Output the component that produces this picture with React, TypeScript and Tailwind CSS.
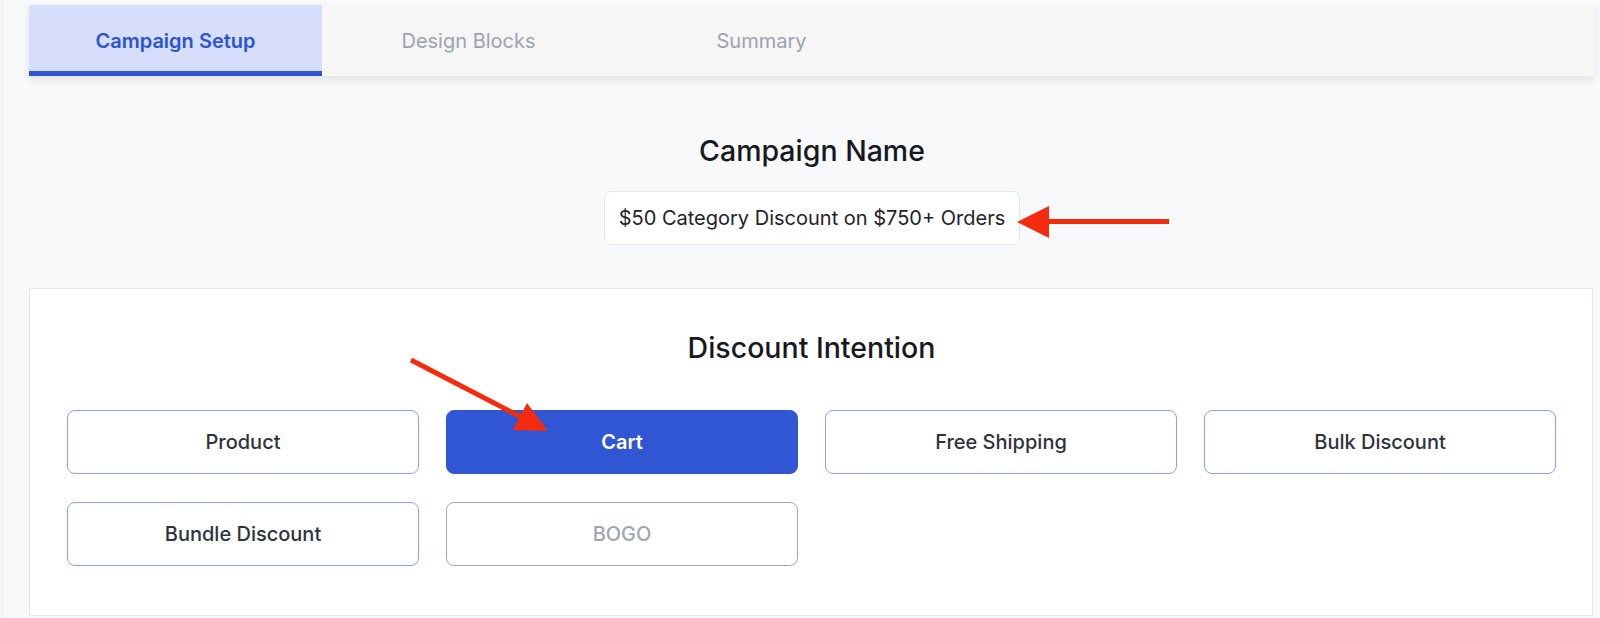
import React from "react";

const options = [
  { label: "Product", state: "normal" },
  { label: "Cart", state: "active" },
  { label: "Free Shipping", state: "normal" },
  { label: "Bulk Discount", state: "normal" },
  { label: "Bundle Discount", state: "normal" },
  { label: "BOGO", state: "disabled" },
];

export default function App() {
  return (
    <div className="relative min-h-screen w-full overflow-hidden bg-[#f8f9fb] pl-[29px] pr-[5px] pt-[5px] font-['Inter',sans-serif]">
      <div className="absolute left-[2px] top-0 bottom-0 w-px bg-[#eceef1]" />
      {/* Tabs */}
      <div className="flex h-[71px] bg-[#f6f6f6] shadow-[0_4px_8px_rgba(0,0,0,0.09)]">
        <div className="flex w-[293px] items-center justify-center bg-[#d6defb] text-[20px] font-semibold text-[#2c53d3] shadow-[inset_0_-5px_0_#2f55d4]">
          Campaign Setup
        </div>
        <div className="flex w-[293px] items-center justify-center text-[20px] text-[#9ca3af]">
          Design Blocks
        </div>
        <div className="flex w-[293px] items-center justify-center text-[20px] text-[#9ca3af]">
          Summary
        </div>
      </div>

      {/* Campaign name */}
      <h2 className="mt-[58px] text-center text-[28.5px] font-medium leading-[34px] text-[#16191d]">
        Campaign Name
      </h2>
      <div className="mt-[23px] flex justify-center">
        <div className="flex h-[54px] w-[416px] items-center justify-center whitespace-nowrap rounded-[7px] border border-[#e3e5e9] bg-white text-[20px] text-[#1f2328]">
          $50 Category Discount on $750+ Orders
        </div>
      </div>

      {/* Discount intention card */}
      <div className="mr-[2px] mt-[43px] border border-[#e4e6ea] bg-white pb-[49px] pl-[37px] pr-[36px] pt-[42px]">
        <h2 className="text-center text-[28.5px] font-medium leading-[34px] text-[#16191d]">
          Discount Intention
        </h2>
        <div className="mt-[45px] grid grid-cols-4 gap-x-[27px] gap-y-[28px]">
          {options.map((o) =>
            o.state === "active" ? (
              <div
                key={o.label}
                className="flex h-[64px] items-center justify-center rounded-[8px] border border-[#3056d3] bg-[#3056d3] text-[20px] font-semibold text-white"
              >
                {o.label}
              </div>
            ) : o.state === "disabled" ? (
              <div
                key={o.label}
                className="flex h-[64px] items-center justify-center rounded-[8px] border border-[#a4a8b0] bg-white text-[20px] font-medium text-[#a0a6b1]"
              >
                {o.label}
              </div>
            ) : (
              <div
                key={o.label}
                className="flex h-[64px] items-center justify-center rounded-[8px] border border-[#8ba2ef] bg-white text-[20px] font-medium text-[#2d333b]"
              >
                {o.label}
              </div>
            )
          )}
        </div>
      </div>

      {/* Annotation arrows */}
      <svg
        className="pointer-events-none absolute left-0 top-0"
        width="1600"
        height="618"
        viewBox="0 0 1600 618"
      >
        <line x1="1169" y1="221.5" x2="1046" y2="221.5" stroke="#f42c0f" strokeWidth="5" />
        <polygon points="1017,222 1049,206 1049,238" fill="#f42c0f" />
        <line x1="411" y1="360" x2="522" y2="417.5" stroke="#f42c0f" strokeWidth="5" />
        <polygon points="548,431 513,430 527,403" fill="#f42c0f" />
      </svg>
    </div>
  );
}
